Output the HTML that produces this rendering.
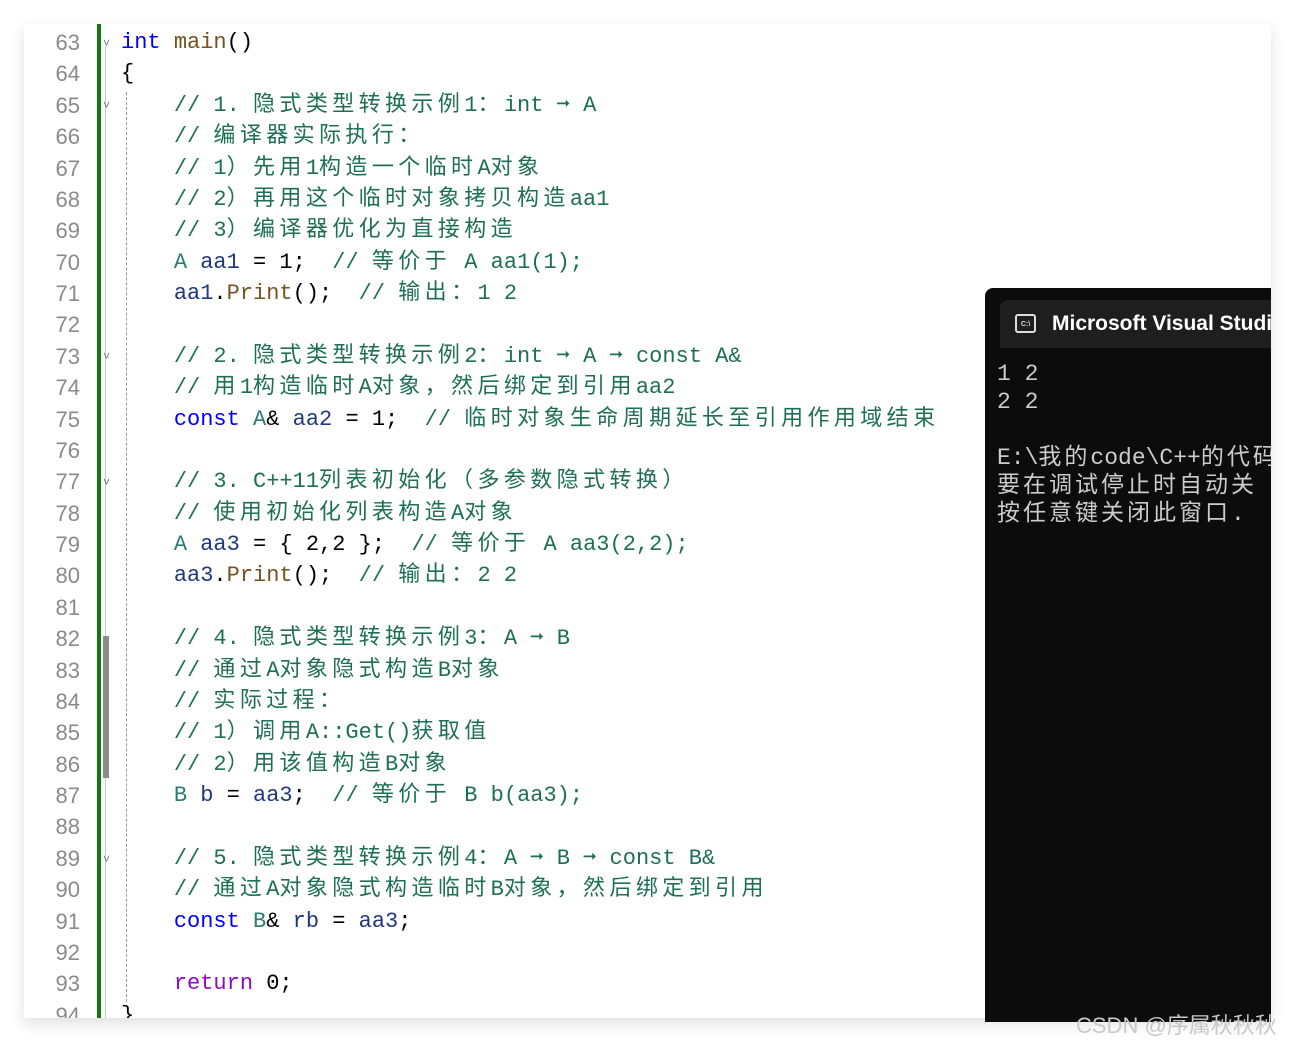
<!DOCTYPE html><html><head><meta charset="utf-8"><style>
body{margin:0;width:1295px;height:1046px;background:#fff;position:relative;overflow:hidden}
#ed{position:absolute;left:24px;top:24px;width:1247px;height:994px;background:#fff;box-shadow:0 6px 14px rgba(0,0,0,.12);overflow:hidden}
#ln{position:absolute;left:0;top:3px;width:56px;text-align:right;font:22px/31.37px "Liberation Sans",sans-serif;color:#8a8a8a;margin:0}
#bar{position:absolute;left:73px;top:0;width:4px;height:994px;background:#127812}
#fold{position:absolute;left:81px;top:22px;width:1px;height:980px;background:#c8c8c8}
#guide{position:absolute;left:102px;top:68px;width:0;height:910px;border-left:1px dashed #999}
#sm{position:absolute;left:79px;top:612px;width:6px;height:142px;background:#8a8a8a}
pre#code{position:absolute;left:97px;top:3px;margin:0;font:22px/31.37px "Liberation Mono","Noto Sans CJK SC",monospace;color:#000;white-space:pre}
.z{letter-spacing:4.4px}
.c{color:#1d6f55}.k{color:#0000ff}.f{color:#74531f}.t{color:#2b7d73}.v{color:#1f377f}.r{color:#8f08c4}
.fm{position:absolute;left:79px;font:12px "Liberation Sans";color:#777}
#con{position:absolute;left:985px;top:288px;width:286px;height:734px;background:#0c0c0c;border-radius:8px 0 0 0;overflow:hidden}
#tab{position:absolute;left:15px;top:12px;width:300px;height:48px;background:#1e1e1e;border-radius:8px 8px 0 0}
#tt{position:absolute;left:67px;top:24px;font:bold 21px "Liberation Sans",sans-serif;color:#fff;white-space:nowrap}
#ic{position:absolute;left:30px;top:26px;width:17px;height:15px;border:2px solid #ddd;border-radius:3px;font:bold 7px "Liberation Sans";color:#ddd;text-align:center;line-height:17px}
#out{position:absolute;left:12px;top:72px;margin:0;font:23px/28px "Liberation Mono","Noto Sans CJK SC",monospace;color:#ccc;white-space:pre}
#out .z{letter-spacing:3px}
#wm{position:absolute;left:1076px;top:1008px;font:22px "Liberation Sans","Noto Sans CJK SC",sans-serif;color:#c8c8c8;white-space:nowrap}
</style></head><body>
<div id="ed">
<pre id="ln">63
64
65
66
67
68
69
70
71
72
73
74
75
76
77
78
79
80
81
82
83
84
85
86
87
88
89
90
91
92
93
94</pre>
<div id="bar"></div><div id="fold"></div><div id="guide"></div><div id="sm"></div>
<div class="fm" style="top:12px">˅</div><div class="fm" style="top:74px">˅</div><div class="fm" style="top:325px">˅</div><div class="fm" style="top:451px">˅</div><div class="fm" style="top:828px">˅</div>
<pre id="code"><span class="k">int</span> <span class="f">main</span>()
{
    <span class="c">// 1. <span class="z">隐式类型转换示例</span>1<span class="z">：</span>int ➞ A</span>
    <span class="c">// <span class="z">编译器实际执行：</span></span>
    <span class="c">// 1<span class="z">）先用</span>1<span class="z">构造一个临时</span>A<span class="z">对象</span></span>
    <span class="c">// 2<span class="z">）再用这个临时对象拷贝构造</span>aa1</span>
    <span class="c">// 3<span class="z">）编译器优化为直接构造</span></span>
    <span class="t">A</span> <span class="v">aa1</span> = 1;  <span class="c">// <span class="z">等价于</span> A aa1(1);</span>
    <span class="v">aa1</span>.<span class="f">Print</span>();  <span class="c">// <span class="z">输出：</span>1 2</span>

    <span class="c">// 2. <span class="z">隐式类型转换示例</span>2<span class="z">：</span>int ➞ A ➞ const A&amp;</span>
    <span class="c">// <span class="z">用</span>1<span class="z">构造临时</span>A<span class="z">对象，然后绑定到引用</span>aa2</span>
    <span class="k">const</span> <span class="t">A</span>&amp; <span class="v">aa2</span> = 1;  <span class="c">// <span class="z">临时对象生命周期延长至引用作用域结束</span></span>

    <span class="c">// 3. C++11<span class="z">列表初始化（多参数隐式转换）</span></span>
    <span class="c">// <span class="z">使用初始化列表构造</span>A<span class="z">对象</span></span>
    <span class="t">A</span> <span class="v">aa3</span> = { 2,2 };  <span class="c">// <span class="z">等价于</span> A aa3(2,2);</span>
    <span class="v">aa3</span>.<span class="f">Print</span>();  <span class="c">// <span class="z">输出：</span>2 2</span>

    <span class="c">// 4. <span class="z">隐式类型转换示例</span>3<span class="z">：</span>A ➞ B</span>
    <span class="c">// <span class="z">通过</span>A<span class="z">对象隐式构造</span>B<span class="z">对象</span></span>
    <span class="c">// <span class="z">实际过程：</span></span>
    <span class="c">// 1<span class="z">）调用</span>A::Get()<span class="z">获取值</span></span>
    <span class="c">// 2<span class="z">）用该值构造</span>B<span class="z">对象</span></span>
    <span class="t">B</span> <span class="v">b</span> = <span class="v">aa3</span>;  <span class="c">// <span class="z">等价于</span> B b(aa3);</span>

    <span class="c">// 5. <span class="z">隐式类型转换示例</span>4<span class="z">：</span>A ➞ B ➞ const B&amp;</span>
    <span class="c">// <span class="z">通过</span>A<span class="z">对象隐式构造临时</span>B<span class="z">对象，然后绑定到引用</span></span>
    <span class="k">const</span> <span class="t">B</span>&amp; <span class="v">rb</span> = <span class="v">aa3</span>;

    <span class="r">return</span> 0;
}</pre>
</div>
<div id="con"><div id="tab"></div><div id="ic">C:\</div><div id="tt">Microsoft Visual Studio</div>
<pre id="out">1 2
2 2

E:\<span class="z">我的</span>code\C++<span class="z">的代码</span>
<span class="z">要在调试停止时自动关</span>
<span class="z">按任意键关闭此窗口</span>.</pre></div>
<div id="wm">CSDN @序属秋秋秋</div>
</body></html>
